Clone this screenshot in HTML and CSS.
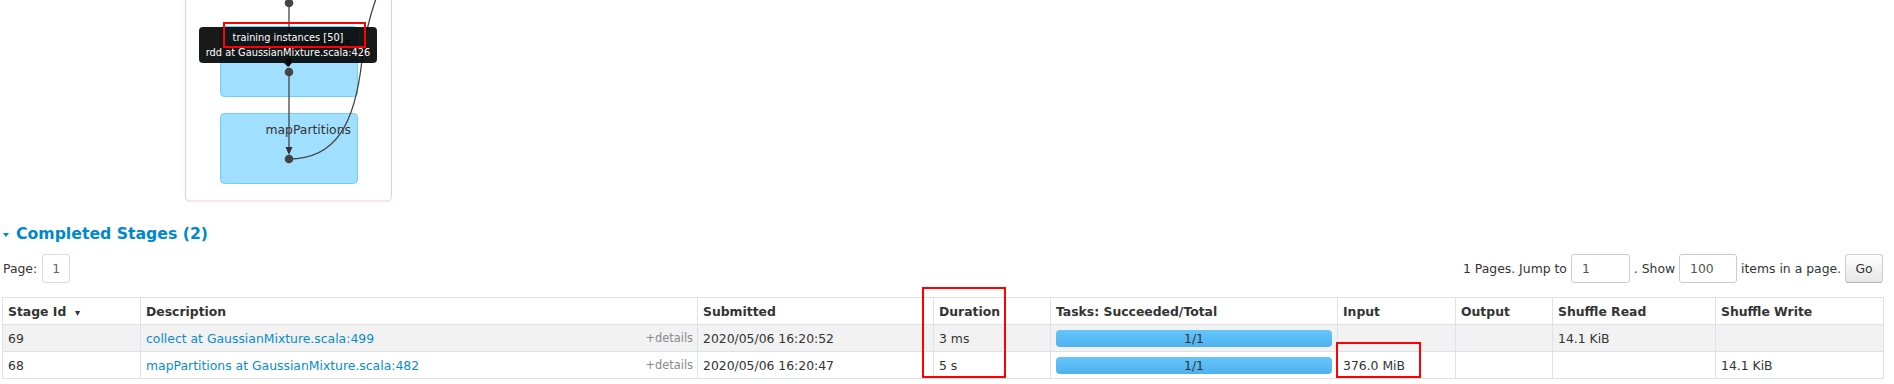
FILE: index.html
```html
<!DOCTYPE html>
<html>
<head>
<meta charset="utf-8">
<link rel="stylesheet" href="styles.css">
</head>
<body>
<div class="dag">
  <svg class="dag-svg" width="420" height="222" viewBox="0 0 420 222">
    <rect class="stage" x="185.5" y="-20" width="206" height="221" rx="4" ry="4"></rect>
    <rect class="node-box" x="220.5" y="26.5" width="137" height="70" rx="4" ry="4"></rect>
    <text class="node-label" x="351" y="47">mapPartitions</text>
    <rect class="node-box" x="220.5" y="113.5" width="137" height="70" rx="4" ry="4"></rect>
    <text class="node-label" x="351" y="134">mapPartitions</text>
    <path class="edge" d="M289,0 L289,66"></path>
    <path class="edge" d="M289,72 L289,153"></path>
    <path class="edge" d="M289,159 C335,159 355,125 362,60 C365,35 371,12 377,-4"></path>
    <polygon class="arrow" points="285.5,59 292.5,59 289,67"></polygon>
    <polygon class="arrow" points="285.5,147 292.5,147 289,155"></polygon>
    <circle class="dot" cx="289" cy="3" r="4.3"></circle>
    <circle class="dot" cx="289" cy="72" r="4.3"></circle>
    <circle class="dot" cx="289" cy="159" r="4.3"></circle>
  </svg>
  <div class="tooltip">
    <div>training instances [50]</div>
    <div>rdd at GaussianMixture.scala:426</div>
  </div>
</div>

<h4 class="section-title"><span class="arrow-open"></span><a class="title-link">Completed Stages (2)</a></h4>

<div class="content">
  <div class="pager">
    <div class="pager-left">Page: <span class="page-num">1</span></div>
    <div class="pager-right">1 Pages. Jump to <span class="field field-jump">1</span> . Show <span class="field field-size">100</span> items in a page. <span class="go-btn">Go</span></div>
  </div>

  <table class="stages">
    <colgroup>
      <col class="c1"><col class="c2"><col class="c3"><col class="c4"><col class="c5"><col class="c6"><col class="c7"><col class="c8"><col class="c9">
    </colgroup>
    <thead>
      <tr>
        <th>Stage Id &nbsp;<span class="sort">▾</span></th>
        <th>Description</th>
        <th>Submitted</th>
        <th>Duration</th>
        <th>Tasks: Succeeded/Total</th>
        <th>Input</th>
        <th>Output</th>
        <th>Shuffle Read</th>
        <th>Shuffle Write</th>
      </tr>
    </thead>
    <tbody>
      <tr class="odd">
        <td>69</td>
        <td><div class="desc"><a class="link">collect at GaussianMixture.scala:499</a><span class="details">+details</span></div></td>
        <td>2020/05/06 16:20:52</td>
        <td>3 ms</td>
        <td><div class="progress">1/1</div></td>
        <td></td>
        <td></td>
        <td>14.1 KiB</td>
        <td></td>
      </tr>
      <tr>
        <td>68</td>
        <td><div class="desc"><a class="link">mapPartitions at GaussianMixture.scala:482</a><span class="details">+details</span></div></td>
        <td>2020/05/06 16:20:47</td>
        <td>5 s</td>
        <td><div class="progress">1/1</div></td>
        <td>376.0 MiB</td>
        <td></td>
        <td></td>
        <td>14.1 KiB</td>
      </tr>
    </tbody>
  </table>
</div>

<div class="mark mark-tip"></div>
<div class="mark mark-duration"></div>
<div class="mark mark-input"></div>
</body>
</html>
```

FILE: styles.css
```css
html, body {
  margin: 0;
  padding: 0;
  background: #fff;
}
body {
  position: relative;
  width: 1894px;
  height: 384px;
  overflow: hidden;
  font-family: "DejaVu Sans", "Liberation Sans", sans-serif;
  font-size: 12.4px;
  color: #333;
}

/* DAG area */
.dag {
  position: relative;
  height: 223px;
}
.dag-svg {
  display: block;
}
.stage {
  fill: #fff;
  stroke: #ffc4cf;
  stroke-width: 1px;
}
.node-box {
  fill: #a0dfff;
  stroke: #6fcdfc;
  stroke-width: 1px;
}
.node-label {
  font-family: "DejaVu Sans", sans-serif;
  font-size: 12.4px;
  fill: #333;
  text-anchor: end;
}
.edge {
  fill: none;
  stroke: #444;
  stroke-width: 1.3px;
}
.arrow {
  fill: #333;
}
.dot {
  fill: #444;
}

.tooltip {
  position: absolute;
  left: 199px;
  top: 27px;
  width: 178px;
  height: 36px;
  box-sizing: border-box;
  padding-top: 3px;
  background: rgba(0, 0, 0, 0.9);
  border-radius: 4px;
  color: #fff;
  font-size: 9.8px;
  line-height: 15px;
  text-align: center;
}
.tooltip::after {
  content: "";
  position: absolute;
  left: 85px;
  bottom: -4px;
  border-left: 4px solid transparent;
  border-right: 4px solid transparent;
  border-top: 4px solid rgba(0, 0, 0, 0.9);
}

/* Section title */
.section-title {
  margin: 0;
  padding-left: 3px;
  height: 22px;
  line-height: 22px;
  font-size: 15.7px;
  font-weight: bold;
  display: flex;
  align-items: center;
}
.arrow-open {
  display: inline-block;
  width: 0;
  height: 0;
  border-left: 3.5px solid transparent;
  border-right: 3.5px solid transparent;
  border-top: 4px solid #0088cc;
  margin-right: 7px;
  margin-top: 2px;
}
.title-link {
  color: #0088cc;
}

/* Content */
.content {
  margin-left: 2px;
  width: 1881px;
}
.pager {
  margin-top: 9px;
  height: 29px;
  display: flex;
  justify-content: space-between;
  align-items: center;
}
.pager-left {
  display: flex;
  align-items: center;
  padding-left: 1px;
}
.page-num {
  display: inline-flex;
  align-items: center;
  justify-content: center;
  box-sizing: border-box;
  width: 28px;
  height: 29px;
  margin-left: 5px;
  border: 1px solid #dcdcdc;
  border-radius: 3px;
  color: #666;
}
.pager-right {
  display: flex;
  align-items: center;
  white-space: pre;
}
.field {
  display: inline-flex;
  align-items: center;
  box-sizing: border-box;
  height: 29px;
  padding-left: 10px;
  border: 1px solid #ccc;
  border-radius: 3px;
  color: #555;
}
.field-jump {
  width: 59px;
}
.field-size {
  width: 58px;
}
.go-btn {
  display: inline-flex;
  align-items: center;
  justify-content: center;
  box-sizing: border-box;
  width: 38px;
  height: 29px;
  border: 1px solid #ccc;
  border-bottom-color: #b3b3b3;
  border-radius: 3px;
  background: linear-gradient(#ffffff, #e6e6e6);
  color: #333;
}

/* Table */
.stages {
  margin-top: 14px;
  width: 1881px;
  table-layout: fixed;
  border-collapse: collapse;
  border: 1px solid #dee2e6;
}
.c1 { width: 138px; }
.c2 { width: 557px; }
.c3 { width: 236px; }
.c4 { width: 117px; }
.c5 { width: 287px; }
.c6 { width: 118px; }
.c7 { width: 97px; }
.c8 { width: 163px; }
.c9 { width: 168px; }

.stages th,
.stages td {
  border: 1px solid #dee2e6;
  padding: 0 5px;
  height: 26px;
  text-align: left;
  vertical-align: middle;
  white-space: nowrap;
  overflow: hidden;
}
.stages th {
  font-weight: bold;
  color: #333;
  background: #fff;
}
.stages tr.odd td {
  background: #f2f2f2;
}
.sort {
  font-size: 10px;
}
.desc {
  display: flex;
  justify-content: space-between;
  align-items: center;
}
.link {
  color: #0a8bd0;
}
.details {
  font-size: 11.4px;
  color: #8a8a8a;
  margin-right: -1px;
}
.progress {
  height: 17px;
  border-radius: 4px;
  background: linear-gradient(#65c6fa, #4eb1ee);
  text-align: center;
  line-height: 17px;
  color: #333;
}

/* Annotation marks */
.mark {
  position: absolute;
  box-sizing: border-box;
  border: 2px solid #f00;
}
.mark-tip {
  left: 223px;
  top: 22px;
  width: 143px;
  height: 26px;
}
.mark-duration {
  left: 922px;
  top: 287px;
  width: 84px;
  height: 91px;
}
.mark-input {
  left: 1336px;
  top: 342px;
  width: 85px;
  height: 36px;
}
```
